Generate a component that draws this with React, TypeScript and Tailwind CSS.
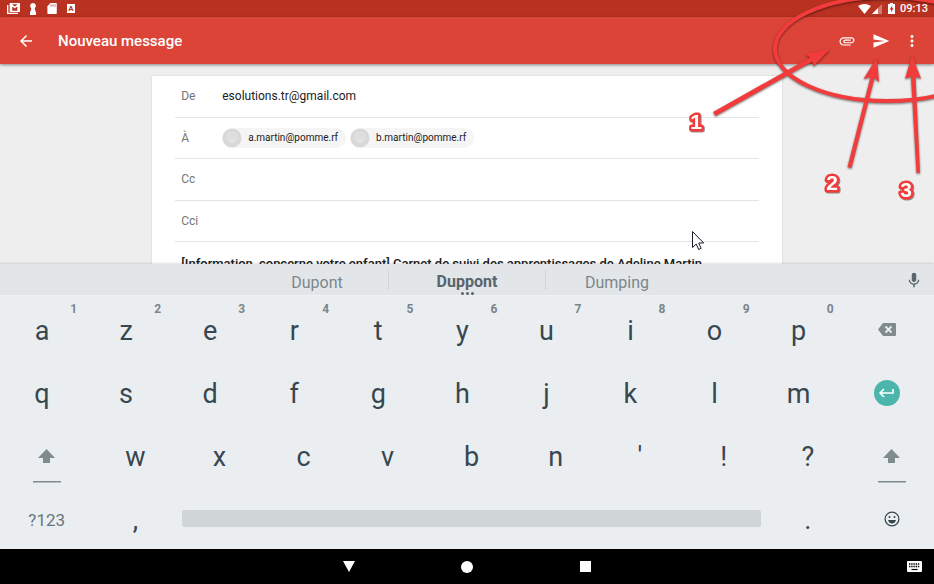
import type { ReactNode } from 'react';

const ROW_1 = ['a', 'z', 'e', 'r', 't', 'y', 'u', 'i', 'o', 'p'];
const ROW_2 = ['q', 's', 'd', 'f', 'g', 'h', 'j', 'k', 'l', 'm'];
const ROW_3 = ['w', 'x', 'c', 'v', 'b', 'n', "'", '!', '?'];

function Glyph({ d, className }: { d: string; className: string }) {
  return (
    <svg viewBox="0 0 24 24" className={className} fill="currentColor" aria-hidden="true">
      <path d={d} />
    </svg>
  );
}

function StatusBar() {
  return (
    <div className="flex h-[17px] shrink-0 items-center justify-between bg-[#b93221] pr-[6px] pl-[7px] text-white">
      <div className="flex items-center">
        <svg viewBox="0 0 13 11" className="mr-[9px] h-[11px] w-[13px]" aria-hidden="true">
          <path d="M.7 2v8.3H11" fill="none" stroke="currentColor" strokeWidth="1.3" />
          <path d="M3.3.7h9v7.6h-9zM3.6 1l4.2 3.6L12 1M4.6 2v6M11 2v6" fill="none" stroke="currentColor" strokeWidth="1.3" />
        </svg>
        <svg viewBox="0 0 8 12" className="mr-[10px] h-[12px] w-[8px]" fill="currentColor" aria-hidden="true">
          <path d="M4 0a2.9 2.9 0 0 1 2 5L5.700 6l1.300 3.600V12H1V9.600L2.300 6 2 5A2.900 2.900 0 0 1 4 0z" />
        </svg>
        <svg viewBox="0 0 10 11" className="mr-[10px] h-[11px] w-[10px]" aria-hidden="true">
          <path d="M3.500 0H9q.8 0 .8.800v9.400q0 .8-.8.8H1.200q-.8 0-.8-.8V3.200z" fill="currentColor" />
          <path d="M4 1.500v2M6 1.500v2M8 1.500v2" stroke="#b93221" strokeWidth=".8" />
        </svg>
        <span className="flex h-[9px] w-[8px] items-center justify-center bg-white text-[8px] leading-none font-bold text-[#b93221]">
          A
        </span>
      </div>
      <div className="flex items-center">
        <svg viewBox="0 0 13 10" className="mr-[1px] h-[10px] w-[13px]" fill="currentColor" aria-hidden="true">
          <path d="M6.500 10 0 2Q6.500-2 13 2z" />
        </svg>
        <svg viewBox="0 0 10 10" className="mr-[6px] h-[10px] w-[10px]" fill="currentColor" aria-hidden="true">
          <path d="M0 10 10 0v10z" opacity=".35" />
          <path d="M0 10 6 4V10z" />
        </svg>
        <svg viewBox="0 0 7 11" className="mr-[5px] h-[11px] w-[7px]" aria-hidden="true">
          <path d="M2 0h3v1h2v10H0V1h2z" fill="currentColor" />
          <path d="M4.300 2.500 1.600 6.500h1.500v2.700l2.500-4H4.200z" fill="#b93221" />
        </svg>
        <span className="text-[11px] leading-none font-medium">09:13</span>
      </div>
    </div>
  );
}

function AppBar() {
  return (
    <header className="z-10 flex h-[47px] shrink-0 items-center bg-[#dc4438] pt-px text-white shadow-[0_1px_3px_rgba(0,0,0,0.45)]">
      <button type="button" aria-label="Retour" className="ml-[17px]">
        <Glyph className="size-[18px]" d="M20 11H7.830l5.590-5.590L12 4l-8 8 8 8 1.410-1.410L7.830 13H20v-2z" />
      </button>
      <h1 className="ml-[23px] flex-1 text-[15px] leading-5 font-medium">Nouveau message</h1>
      <div className="flex items-center pr-[13px]">
        <button type="button" aria-label="Joindre un fichier" className="mr-4">
          <Glyph
            className="size-[18px]"
            d="M2 12.500C2 9.460 4.460 7 7.500 7H18c2.210 0 4 1.790 4 4s-1.790 4-4 4H9.500a2.500 2.500 0 0 1 0-5H17v1.500H9.410c-.9 0-.9 2 0 2H18c1.400 0 2.500-1.100 2.500-2.500s-1.100-2.500-2.500-2.500H7.500c-2.200 0-4 1.800-4 4s1.800 4 4 4H17V18H7.500C4.460 18 2 15.540 2 12.500z"
          />
        </button>
        <button type="button" aria-label="Envoyer" className="mr-[13px]">
          <Glyph className="size-[18px]" d="M2.010 21 23 12 2.010 3 2 10l15 2-15 2z" />
        </button>
        <button type="button" aria-label="Plus d'options">
          <Glyph
            className="size-[18px]"
            d="M12 8c1.100 0 2-.9 2-2s-.9-2-2-2-2 .9-2 2 .9 2 2 2zm0 2c-1.100 0-2 .9-2 2s.9 2 2 2 2-.9 2-2-.9-2-2-2zm0 6c-1.100 0-2 .9-2 2s.9 2 2 2 2-.9 2-2-.9-2-2-2z"
          />
        </button>
      </div>
    </header>
  );
}

function Chip({ address }: { address: string }) {
  return (
    <span className="flex h-5 items-center rounded-full bg-[#f5f5f5] pr-2 text-[10px] text-[#212121]">
      <svg viewBox="0 0 20 20" className="mr-[6px] size-5" aria-hidden="true">
        <circle cx="10" cy="10" r="9.500" fill="#d8d8d8" />
        <circle cx="10" cy="9" r="6" fill="#dedede" />
        <path d="M6 11q4 5 8 0" fill="none" stroke="#ececec" />
      </svg>
      {address}
    </span>
  );
}

function Field({ label, id, children }: { label: string; id: string; children: ReactNode }) {
  return (
    <div className="flex items-center border-b border-[#e4e4e4] pl-[6px]">
      <label htmlFor={id} className="w-[41px] text-xs text-[#757575]">
        {label}
      </label>
      {children}
    </div>
  );
}

function Compose() {
  const input = 'min-w-0 flex-1 bg-transparent text-xs text-[#212121] outline-none';
  return (
    <main className="flex min-h-0 flex-1 justify-center overflow-hidden bg-[#eee] pt-3">
      <form className="flex w-[67.4%] flex-col bg-white px-[23px] shadow-[0_0_2px_rgba(0,0,0,0.12)]">
        <div className="grid h-[166px] shrink-0 grid-rows-4">
          <Field label="De" id="from">
            <input id="from" className={input} defaultValue="esolutions.tr@gmail.com" />
          </Field>
          <Field label="À" id="to">
            <div className="flex flex-1 items-center gap-1">
              <Chip address="a.martin@pomme.rf" />
              <Chip address="b.martin@pomme.rf" />
              <input id="to" className={input} />
            </div>
          </Field>
          <Field label="Cc" id="cc">
            <input id="cc" className={input} />
          </Field>
          <Field label="Cci" id="bcc">
            <input id="bcc" className={input} />
          </Field>
        </div>
        <input
          aria-label="Objet"
          className="h-[42px] shrink-0 bg-transparent pl-[6px] text-[13px] font-medium text-[#212121] outline-none"
          defaultValue="[Information, concerne votre enfant] Carnet de suivi des apprentissages de Adeline Martin"
        />
      </form>
    </main>
  );
}

function Suggestions() {
  return (
    <div className="z-10 grid h-8 shrink-0 grid-cols-[1fr_158px_158px_158px_1fr] items-center border-b border-[#eff2f4] bg-[#e2e6e9] text-base text-[#7b878c] shadow-[0_-1px_2px_rgba(0,0,0,0.12)]">
      <span />
      <button type="button" className="pt-[6px] pl-4">Dupont</button>
      <button
        type="button"
        className="relative flex h-5 items-center justify-center border-x border-[#d0d5d8] pt-[5px] leading-5 font-bold text-[#57656c]"
      >
        Duppont
        <span className="absolute inset-x-0 -bottom-[5px] flex justify-center gap-[2px]">
          <i className="size-[3px] rounded-full bg-[#57656c]" />
          <i className="size-[3px] rounded-full bg-[#57656c]" />
          <i className="size-[3px] rounded-full bg-[#57656c]" />
        </span>
      </button>
      <button type="button" className="pt-[6px] pr-4">Dumping</button>
      <button type="button" aria-label="Saisie vocale" className="mr-3 pt-px justify-self-end">
        <Glyph
          className="size-4 text-[#59666c]"
          d="M12 15c1.900 0 3.400-1.500 3.400-3.400V4.400a3.400 3.400 0 0 0-6.800 0v7.200C8.600 13.500 10.100 15 12 15zm6-3.500c0 3.300-2.700 5.800-6 5.800s-6-2.500-6-5.800H4c0 3.900 3 6.900 6.800 7.500V23h2.400v-4c3.800-.6 6.800-3.600 6.800-7.500z"
        />
      </button>
    </div>
  );
}

function Key({ char, hint }: { char: string; hint?: string }) {
  return (
    <button type="button" className="relative flex items-center justify-center pt-[3px]">
      {char}
      {hint && (
        <span className="absolute top-[3px] right-[7px] text-xs leading-4 font-bold text-[#78858b]">{hint}</span>
      )}
    </button>
  );
}

function ShiftKey() {
  return (
    <button type="button" aria-label="Maj" className="flex flex-col items-center pt-[25px] text-[#7f8b8f]">
      <svg viewBox="0 0 17 14" className="h-[14px] w-[17px]" fill="currentColor" aria-hidden="true">
        <path d="M8.500 0 17 9h-5v5H5V9H0z" />
      </svg>
      <span className="mt-[18px] h-px w-7 bg-current shadow-[0_1px_0_#b5bdc0]" />
    </button>
  );
}

function Keyboard() {
  return (
    <div className="grid h-[253px] shrink-0 grid-rows-[repeat(4,63px)] bg-[#ebeef1] pt-[2px] text-[27px] leading-none text-[#37474f]">
      <div className="grid grid-cols-[repeat(10,9fr)_10fr]">
        {ROW_1.map((char, i) => (
          <Key key={char} char={char} hint={String((i + 1) % 10)} />
        ))}
        <button type="button" aria-label="Effacer" className="flex items-center justify-center">
          <svg viewBox="0 0 18 13" className="h-[13px] w-[18px]" aria-hidden="true">
            <path d="M5 0h12q1 0 1 1v11q0 1-1 1H5L0 6.500z" fill="#808b8f" />
            <path d="m7.500 3.500 6 6m0-6-6 6" stroke="#ebeef1" strokeWidth="1.800" />
          </svg>
        </button>
      </div>
      <div className="grid grid-cols-[repeat(10,9fr)_10fr]">
        {ROW_2.map((char) => (
          <Key key={char} char={char} />
        ))}
        <button type="button" aria-label="Entrée" className="flex items-center justify-center">
          <svg viewBox="0 0 26 26" className="size-[26px]" aria-hidden="true">
            <circle cx="13" cy="13" r="13" fill="#4db6ac" />
            <path d="M19 9v4H6m4-4-4 4 4 4" fill="none" stroke="#fff" strokeWidth="1.600" />
          </svg>
        </button>
      </div>
      <div className="grid grid-cols-[10fr_repeat(10,9fr)]">
        <ShiftKey />
        {ROW_3.map((char) => (
          <Key key={char} char={char} />
        ))}
        <ShiftKey />
      </div>
      <div className="grid grid-cols-[10fr_9fr_63fr_9fr_9fr]">
        <button type="button" className="pt-[3px] text-[17px] text-[#68777d]">?123</button>
        <Key char="," />
        <button type="button" aria-label="Espace" className="flex items-center px-[5px]">
          <span className="h-[17px] w-full rounded-xs bg-[#d0d5d8]" />
        </button>
        <Key char="." />
        <button type="button" aria-label="Emoji" className="flex items-center justify-center">
          <svg viewBox="0 0 16 16" className="size-4" aria-hidden="true">
            <circle cx="8" cy="8" r="6.900" fill="none" stroke="currentColor" strokeWidth="1.300" />
            <circle cx="5.500" cy="6" r="1" fill="currentColor" />
            <circle cx="10.500" cy="6" r="1" fill="currentColor" />
            <path d="M4 9h8q-1 3.500-4 3.500T4 9z" fill="currentColor" />
          </svg>
        </button>
      </div>
    </div>
  );
}

function NavBar() {
  return (
    <nav className="z-10 grid h-[35px] shrink-0 grid-cols-[1fr_118px_118px_118px_1fr] items-center justify-items-center bg-black text-white">
      <span />
      <button type="button" aria-label="Retour">
        <svg viewBox="0 0 12 11" className="h-[11px] w-3" fill="currentColor" aria-hidden="true">
          <path d="M0 0h12L6 11z" />
        </svg>
      </button>
      <button type="button" aria-label="Accueil" className="size-3 rounded-full bg-white" />
      <button type="button" aria-label="Applications récentes" className="size-[11px] bg-white" />
      <button type="button" aria-label="Choisir le clavier" className="mr-3 justify-self-end">
        <svg viewBox="0 0 15 11" className="h-[11px] w-[15px]" aria-hidden="true">
          <rect width="15" height="11" rx="1" fill="currentColor" />
          <path d="M2 3h11M2 5.500h11" stroke="#000" strokeWidth="1.300" strokeDasharray="1.400 .8" />
          <path d="M4.500 8.500h6" stroke="#000" strokeWidth="1.200" />
        </svg>
      </button>
    </nav>
  );
}

/* Tutorial marks laid over the top right corner of the screen. */
function Annotations() {
  return (
    <svg
      viewBox="680 0 254 260"
      className="pointer-events-none absolute top-0 right-0 z-20 h-[260px] w-[254px] font-['Liberation_Sans',Arial,sans-serif]"
      aria-hidden="true"
    >
      <g className="drop-shadow-[0_1px_1px_rgba(0,0,0,0.55)]">
        <ellipse cx="887" cy="49" rx="112" ry="52" fill="none" stroke="#f23c3c" strokeWidth="4" />
        <g fill="#f23c3c">
          <path d="M713 112 810 57.500 805.500 54 830 49 813.500 66.500 812.500 61.500 715.500 116z" />
          <path d="M847.500 167 870.500 77 863.500 79 877 57 879 82 874.500 78 851.500 168z" />
          <path d="M916.500 173 911 77 905 78.500 912 55 921 78.500 915.500 77 920 173z" />
        </g>
      </g>
      <g
        className="drop-shadow-[1px_1px_0px_rgba(90,60,60,0.6)]"
        fill="#fff"
        stroke="#f23c3c"
        strokeWidth="5"
        strokeLinejoin="round"
        paintOrder="stroke"
        fontSize="21"
        fontWeight="700"
        textAnchor="middle"
      >
        <text x="696" y="129">1</text>
        <text x="832" y="190">2</text>
        <text x="906" y="197">3</text>
      </g>
      <path d="M692.500 231.500v16l3.700-3.500 2.500 5.500 2.500-1.200-2.500-5.300h5z" fill="#fff" stroke="#1b1b2b" />
    </svg>
  );
}

export default function App() {
  return (
    <div className="relative flex h-screen flex-col overflow-hidden font-['Roboto',sans-serif]">
      <StatusBar />
      <AppBar />
      <Compose />
      <Suggestions />
      <Keyboard />
      <NavBar />
      <Annotations />
    </div>
  );
}
